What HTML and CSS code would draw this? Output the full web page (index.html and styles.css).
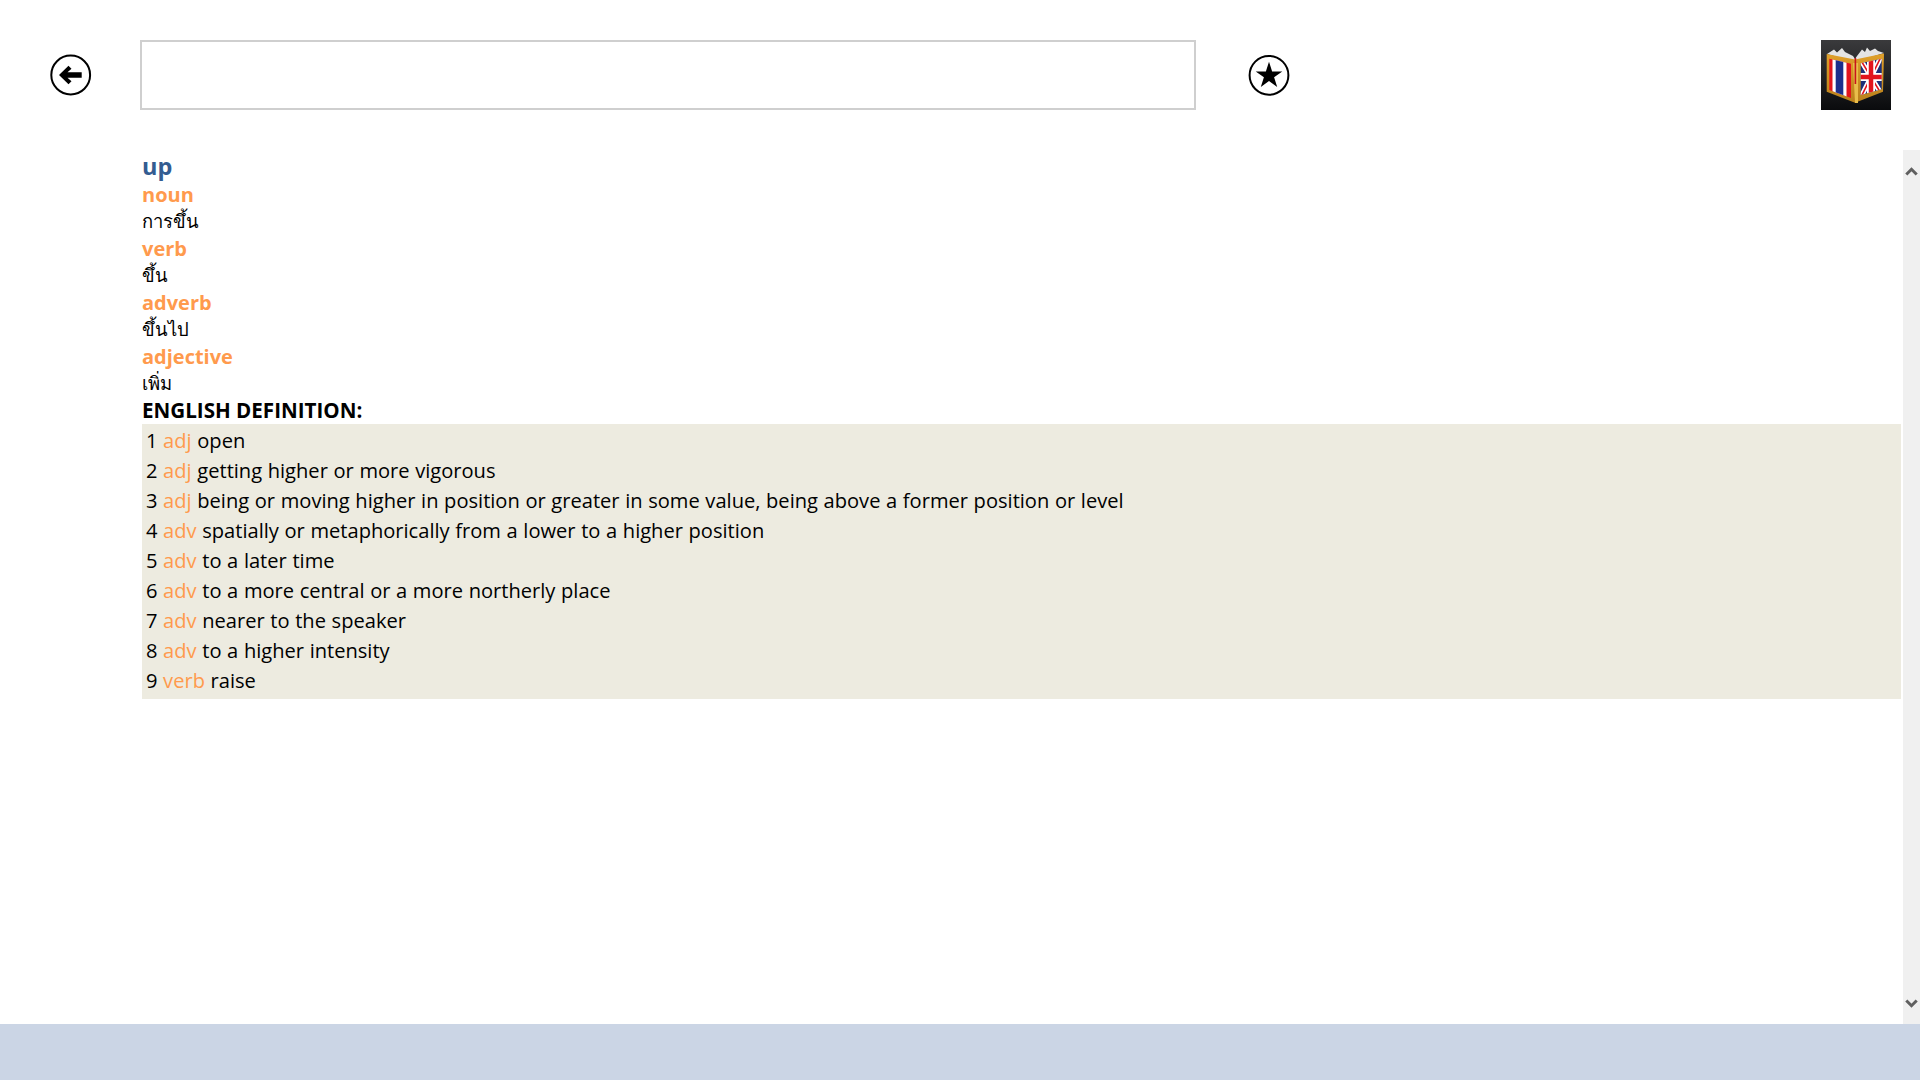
FILE: index.html
```html
<!DOCTYPE html>
<html lang="en">
<head>
<meta charset="utf-8">
<title>Thai English Dictionary</title>
<link rel="stylesheet" href="styles.css">
</head>
<body>
<div class="app">
  <header class="top">
    <button class="round" aria-label="Back">
      <svg width="42" height="42" viewBox="0 0 42 42"><circle cx="20.7" cy="21" r="19.4" fill="none" stroke="#000" stroke-width="2"/><path d="M9 21 18.500 11.800 21.500 14.800 17.500 18.200H31.700V23.800H17.500L21.500 27.200 18.500 30.200Z" fill="#000"/></svg>
    </button>
    <input class="search" type="text" aria-label="Search">
    <button class="round star" aria-label="Favourite">
      <svg width="42" height="42" viewBox="0 0 42 42"><circle cx="21" cy="21.300" r="19.400" fill="none" stroke="#000" stroke-width="2"/><path d="M21 7.700 24.140 17.400H34.300L26.090 23.350 29.200 33 21 27.050 12.800 33 15.910 23.350 7.700 17.400H17.860Z" fill="#000"/></svg>
    </button>
    <div class="logo">
      <svg width="70" height="70" viewBox="0 0 70 70">
        <defs>
          <linearGradient id="bg" x1="0" y1="0" x2="0" y2="1"><stop offset="0" stop-color="#3a3a3c"/><stop offset="1" stop-color="#0a0b0d"/></linearGradient>
          <linearGradient id="gold" x1="0" y1="0" x2="0" y2="1"><stop offset="0" stop-color="#e0a02a"/><stop offset="1" stop-color="#b9801c"/></linearGradient>
          <clipPath id="left"><path d="M8.300 18.800 30 23.800V58L8.300 50Z"/></clipPath>
          <clipPath id="right"><path d="M39.700 23.200 60.700 18.800V49.300L39.700 55Z"/></clipPath>
        </defs>
        <rect width="70" height="70" fill="url(#bg)"/>
        <path d="M6 14 13 9.500 16 12.500 21 8 24 12 32 16 34 19 36 16 41 9.500 44 12 46 7.500 49 11 54 8.500 57 11 63 13 34 22Z" fill="#e4e4e4"/>
        <path d="M5.700 14 34 19.500 63 13.500 62 51.700 34 62.700 5.700 51.700Z" fill="url(#gold)"/>
        <path d="M32 23H37V63H34Z" fill="#e9bd4a"/>
        <path d="M33.600 18H35.200V44H33.600Z" fill="#c8141c"/>
        <g clip-path="url(#left)">
          <rect x="8" y="15" width="24" height="50" fill="#e2141d"/>
          <rect x="11.500" y="15" width="14" height="50" fill="#fff"/>
          <rect x="14.700" y="15" width="7.600" height="50" fill="#1c2f8c"/>
        </g>
        <g clip-path="url(#right)">
          <rect x="39" y="15" width="22" height="50" fill="#1c2f78"/>
          <path d="M39 19 61 55M61 15 39 59" stroke="#fff" stroke-width="5"/>
          <path d="M39 19 61 55M61 15 39 59" stroke="#e2141d" stroke-width="1.600"/>
          <path d="M50 15V65M39 37H61" stroke="#fff" stroke-width="8"/>
          <path d="M50 15V65M39 37H61" stroke="#e2141d" stroke-width="4.500"/>
        </g>
      </svg>
    </div>
  </header>
  <div class="body">
    <main class="content">
      <div class="word">up</div>
      <div class="pos">noun</div>
      <div class="thai">การขึ้น</div>
      <div class="pos">verb</div>
      <div class="thai">ขึ้น</div>
      <div class="pos">adverb</div>
      <div class="thai">ขึ้นไป</div>
      <div class="pos">adjective</div>
      <div class="thai">เพิ่ม</div>
      <div class="heading">ENGLISH DEFINITION:</div>
      <ol class="defs">
        <li>1 <span class="tag">adj</span> open</li>
        <li>2 <span class="tag">adj</span> getting higher or more vigorous</li>
        <li>3 <span class="tag">adj</span> being or moving higher in position or greater in some value, being above a former position or level</li>
        <li>4 <span class="tag">adv</span> spatially or metaphorically from a lower to a higher position</li>
        <li>5 <span class="tag">adv</span> to a later time</li>
        <li>6 <span class="tag">adv</span> to a more central or a more northerly place</li>
        <li>7 <span class="tag">adv</span> nearer to the speaker</li>
        <li>8 <span class="tag">adv</span> to a higher intensity</li>
        <li>9 <span class="tag">verb</span> raise</li>
      </ol>
    </main>
    <div class="scrollbar">
      <svg width="17" height="17" viewBox="0 0 17 17"><path d="M3.300 11.500 8.500 6.300l5.200 5.200" fill="none" stroke="#606060" stroke-width="3"/></svg>
      <svg width="17" height="17" viewBox="0 0 17 17"><path d="M3.300 5.500 8.500 10.700l5.200-5.200" fill="none" stroke="#606060" stroke-width="3"/></svg>
    </div>
  </div>
  <footer class="bar"></footer>
</div>
</body>
</html>
```
FILE: styles.css
```css
* { box-sizing: border-box; }
html, body { margin: 0; height: 100%; background: #fff; overflow: hidden; }
body { font-family: "Open Sans", "Noto Sans", sans-serif; color: #000; }
.app { height: 1080px; display: flex; flex-direction: column; }
.top { height: 150px; flex: none; display: flex; align-items: flex-start; padding: 40px 29px 0 50px; }
.round { width: 42px; height: 42px; margin-top: 14px; padding: 0; border: 0; background: none; display: block; }
.round svg { display: block; }
.search { width: 1056px; height: 70px; margin-left: 48px; border: 2px solid #cfcfcf; background: #fff; }
.star { margin-left: 52px; }
.logo { margin-left: auto; width: 70px; height: 70px; }
.logo svg { display: block; }
.body { flex: 1; min-height: 0; display: flex; }
.content { flex: 1; min-width: 0; padding: 1px 2px 0 142px; }
.word { font-size: 23.500px; line-height: 30px; font-weight: 700; color: #335c91; }
.pos { font-size: 20px; line-height: 27px; font-weight: 700; color: #ff9a4d; }
.thai { font-size: 18.400px; line-height: 25px; padding-bottom: 2px; font-family: "Noto Sans", "Open Sans", sans-serif; }
.heading { font-size: 20.600px; line-height: 27px; font-weight: 700; }
.defs { list-style: none; margin: 0; padding: 2px 4px 3px; background: #edebe0; font-size: 20.100px; line-height: 30px; word-spacing: 0.400px; }
.tag { color: #ff9a4d; }
.scrollbar { width: 17px; flex: none; background: #f0f0f0; display: flex; flex-direction: column; justify-content: space-between; padding: 12.500px 0; }
.scrollbar svg { display: block; }
.bar { height: 56px; flex: none; background: #cbd5e5; }
```
